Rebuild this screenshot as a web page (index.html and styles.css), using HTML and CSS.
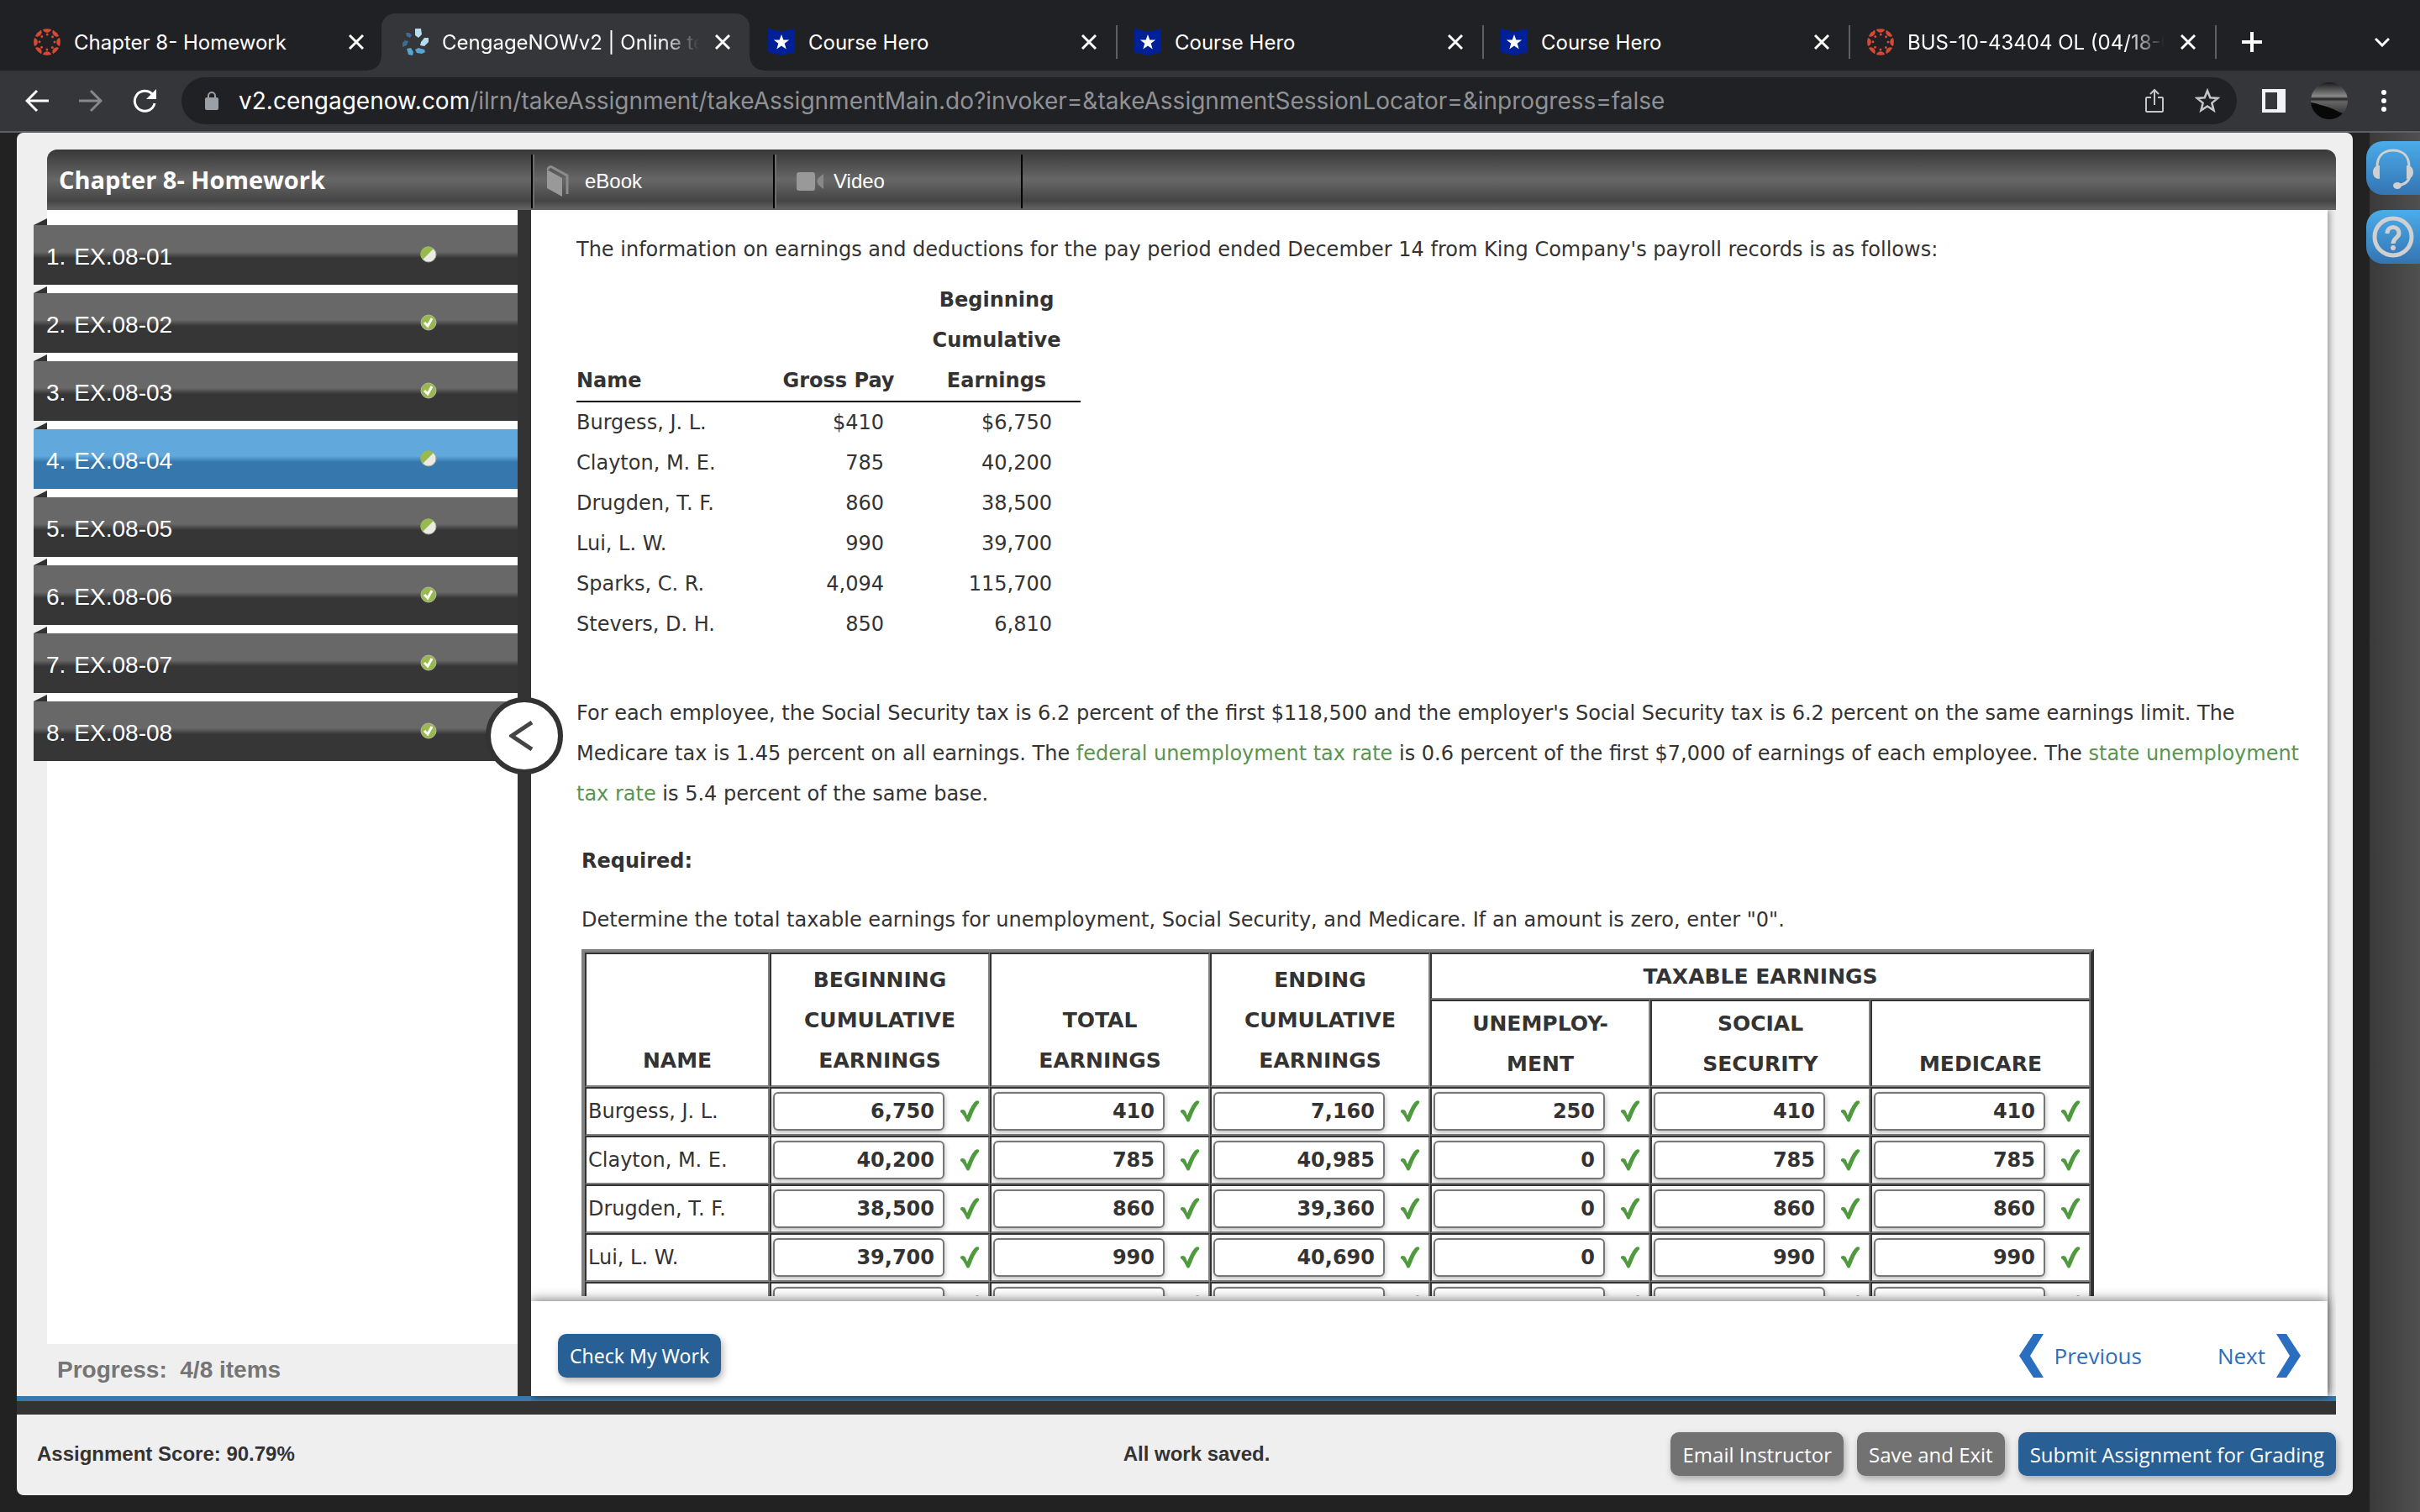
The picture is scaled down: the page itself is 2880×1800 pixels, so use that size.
FILE: index.html
```html
<!DOCTYPE html>
<html lang="en">
	<head>
		<meta charset="UTF-8">
		<title>CengageNOWv2 | Online teaching and learning resource</title>
		<link rel="stylesheet" href="styles.css">
	</head>
	<body>
		<!-- shared icons -->
		<svg class="defs" width="0" height="0">
			<symbol id="canvas" viewBox="0 0 32 32">
				<g id="wedges" fill="#d64a35">
					<path d="M11 1a16 16 0 0 1 10 0c-1 5-9 5-10 0z"/>
					<path d="M11 1a16 16 0 0 1 10 0c-1 5-9 5-10 0z" transform="rotate(45 16 16)"/>
					<path d="M11 1a16 16 0 0 1 10 0c-1 5-9 5-10 0z" transform="rotate(90 16 16)"/>
					<path d="M11 1a16 16 0 0 1 10 0c-1 5-9 5-10 0z" transform="rotate(135 16 16)"/>
					<path d="M11 1a16 16 0 0 1 10 0c-1 5-9 5-10 0z" transform="rotate(180 16 16)"/>
					<path d="M11 1a16 16 0 0 1 10 0c-1 5-9 5-10 0z" transform="rotate(225 16 16)"/>
					<path d="M11 1a16 16 0 0 1 10 0c-1 5-9 5-10 0z" transform="rotate(270 16 16)"/>
					<path d="M11 1a16 16 0 0 1 10 0c-1 5-9 5-10 0z" transform="rotate(315 16 16)"/>
				</g>
				<circle cx="16" cy="16" r="9" fill="none" stroke="#d64a35" stroke-width="3" stroke-linecap="round" stroke-dasharray="0 7.069"/>
			</symbol>
			<symbol id="hero" viewBox="0 0 32 32">
				<path fill="#00209a" d="M0 0l16 4 16-4v28l-16 4-16-4z"/>
				<path fill="#fff" d="M16 7l2.300 6.600h6.900l-5.500 4.200 2 6.700-5.700-4-5.700 4 2-6.700-5.500-4.200h6.900z"/>
			</symbol>
			<symbol id="close" viewBox="0 0 18 18">
				<path d="M1 1l16 16M17 1L1 17" stroke="#fff" stroke-width="3" fill="none"/>
			</symbol>
			<symbol id="done" viewBox="0 0 20 20">
				<circle cx="10" cy="10" r="9" fill="#97b94d" stroke="#b5b5a8"/>
				<path d="M5 10l4 4 5-9" stroke="#fff" stroke-width="3" fill="none"/>
			</symbol>
			<symbol id="half" viewBox="0 0 20 20">
				<circle cx="10" cy="10" r="9" fill="#e9ebe4" stroke="#a5a59a"/>
				<path d="M3 16A9 9 0 0 1 16 3z" fill="#97b94d"/>
			</symbol>
			<symbol id="tick" viewBox="0 0 24 26">
				<path d="M1 12c2-2 5-1 6 1l2 5C12 11 15 4 19 1c1-1 3-1 4 0 1 2-1 3-3 6-4 6-5 11-8 17-1 2-3 2-4 0C6 20 4 16 1 14z" fill="#4f9a3f"/>
			</symbol>
		</svg>

		<header class="browser">
			<div class="tabs">
				<div class="tab first"><svg class="fav"><use href="#canvas"/></svg><span>Chapter 8- Homework</span><button aria-label="Close"><svg><use href="#close"/></svg></button></div>
				<div class="tab active">
					<svg class="fav" viewBox="0 0 32 32">
						<g fill="#b5dcf0"><path d="M16 0h7l1 7-4 4-4-3z"/><path d="M27 11l5 0v5l-5 5-5-1 1-4z"/></g>
						<g fill="#58a5d4"><path d="M16 25l4-2 7 2 1 3-4 2-6-1z"/><path d="M6 24l5-1 3 5-1 4-5-1z"/></g>
						<g fill="#3d6c97"><path d="M1 17l3-3 4 1-2 5-5 2z"/><path d="M5 5l4 0 3 3-2 3-4-2z"/></g>
					</svg>
					<span>CengageNOWv2 | Online te</span><button aria-label="Close"><svg><use href="#close"/></svg></button>
				</div>
				<div class="tab"><svg class="fav"><use href="#hero"/></svg><span>Course Hero</span><button aria-label="Close"><svg><use href="#close"/></svg></button></div>
				<div class="tab line"><svg class="fav"><use href="#hero"/></svg><span>Course Hero</span><button aria-label="Close"><svg><use href="#close"/></svg></button></div>
				<div class="tab line"><svg class="fav"><use href="#hero"/></svg><span>Course Hero</span><button aria-label="Close"><svg><use href="#close"/></svg></button></div>
				<div class="tab line"><svg class="fav"><use href="#canvas"/></svg><span class="cut">BUS-10-43404 OL (04/18-0</span><button aria-label="Close"><svg><use href="#close"/></svg></button></div>
				<button class="new line" aria-label="New tab"><svg viewBox="0 0 24 24" width="24" height="24"><path d="M12 0v24M0 12h24" stroke="#fff" stroke-width="4"/></svg></button>
				<button class="more" aria-label="Search tabs"><svg viewBox="0 0 18 12" width="18" height="12"><path d="M1 2l8 8 8-8" stroke="#fff" stroke-width="3" fill="none"/></svg></button>
			</div>
			<div class="toolbar">
				<div class="nav">
					<button aria-label="Back"><svg viewBox="0 0 28 28" width="28" height="28"><path d="M28 14H3M14 2L2 14l12 12" stroke="#fff" stroke-width="3" fill="none"/></svg></button>
					<button aria-label="Forward"><svg viewBox="0 0 28 28" width="28" height="28"><path d="M0 14h25M14 2l12 12-12 12" stroke="#87888b" stroke-width="3" fill="none"/></svg></button>
					<button aria-label="Reload"><svg viewBox="0 0 28 28" width="28" height="28"><path d="M23 6a12 12 0 1 0 3 11" stroke="#fff" stroke-width="3" fill="none"/><path d="M28 0v12H16z" fill="#fff"/></svg></button>
				</div>
				<div class="url">
					<svg viewBox="0 0 16 22" width="16" height="22"><rect y="7" width="16" height="15" rx="2" fill="#9aa0a6"/><path d="M4 8V5a4 4 0 0 1 8 0v3" stroke="#9aa0a6" stroke-width="2" fill="none"/></svg>
					<p><b>v2.cengagenow.com</b>/ilrn/takeAssignment/takeAssignmentMain.do?invoker=&amp;takeAssignmentSessionLocator=&amp;inprogress=false</p>
					<button aria-label="Share"><svg viewBox="0 0 24 30" width="24" height="30"><path d="M8 11H3a1 1 0 0 0-1 1v15a1 1 0 0 0 1 1h18a1 1 0 0 0 1-1V12a1 1 0 0 0-1-1h-5M12 20V2M7 7l5-5 5 5" stroke="#c4c5c7" stroke-width="2" fill="none"/></svg></button>
					<button aria-label="Bookmark"><svg viewBox="0 0 30 30" width="30" height="30"><path d="M15 3l3.300 8.300 9 .6-7 5.700 2.300 8.800L15 21.500l-7.600 4.900 2.300-8.800-7-5.700 9-.6z" stroke="#c4c5c7" stroke-width="2.500" fill="none"/></svg></button>
				</div>
				<button aria-label="Side panel"><svg viewBox="0 0 28 28" width="28" height="28"><path d="M0 0h28v28H0zM4 4v20h14V4z" fill="#f1f3f4" fill-rule="evenodd"/></svg></button>
				<button aria-label="Profile"><svg viewBox="0 0 44 44" width="44" height="44"><defs><linearGradient id="sea" x2="0" y2="1"><stop offset="0" stop-color="#1a1a1a"/><stop offset=".38" stop-color="#8a8a8a"/><stop offset=".45" stop-color="#222"/><stop offset=".52" stop-color="#666"/><stop offset="1" stop-color="#222"/></linearGradient></defs><circle cx="22" cy="22" r="22" fill="url(#sea)"/><path d="M0 24c8 1 14 4 22 6 6 2 12 6 16 7A22 22 0 0 1 0 24z" fill="#080808"/></svg></button>
				<button class="menu" aria-label="Menu"><svg viewBox="0 0 6 26" width="6" height="26"><g fill="#fff"><circle cx="3" cy="3" r="3"/><circle cx="3" cy="13" r="3"/><circle cx="3" cy="23" r="3"/></g></svg></button>
			</div>
		</header>

		<div class="page">
			<main class="panel">
				<nav class="top">
					<h1>Chapter 8- Homework</h1>
					<a href="#" class="ebook"><svg viewBox="0 0 28 38" width="28" height="38"><path d="M1 5l18 10v22L1 27z" fill="#999"/><path d="M2 5c0-3 3-4 5-3l18 10v22" stroke="#8c8c8c" stroke-width="3" fill="none"/></svg>eBook</a>
					<a href="#" class="video"><svg viewBox="0 0 32 24" width="32" height="24"><rect width="22" height="22" y="1" rx="3" fill="#999"/><path d="M32 3v18l-6-5c-2-3-2-5 0-8z" fill="#888"/></svg>Video</a>
				</nav>
				<div class="work">
					<aside class="side">
						<ul id="items"></ul>
						<p class="progress">Progress:&nbsp; 4/8 items</p>
					</aside>
					<div class="divider">
						<button class="collapse" aria-label="Collapse"><svg viewBox="0 0 28 36" width="28" height="36"><path d="M27 2L3 18l24 16" stroke="#444" stroke-width="5" fill="none"/></svg></button>
					</div>
					<section class="content">
						<div class="scroll">
							<p>The information on earnings and deductions for the pay period ended December 14 from King Company's payroll records is as follows:</p>
							<table class="pay">
								<thead>
									<tr><th>Name</th><th>Gross Pay</th><th>Beginning<br>Cumulative<br>Earnings</th></tr>
								</thead>
								<tbody>
									<tr><td>Burgess, J. L.</td><td>$410</td><td>$6,750</td></tr>
									<tr><td>Clayton, M. E.</td><td>785</td><td>40,200</td></tr>
									<tr><td>Drugden, T. F.</td><td>860</td><td>38,500</td></tr>
									<tr><td>Lui, L. W.</td><td>990</td><td>39,700</td></tr>
									<tr><td>Sparks, C. R.</td><td>4,094</td><td>115,700</td></tr>
									<tr><td>Stevers, D. H.</td><td>850</td><td>6,810</td></tr>
								</tbody>
							</table>
							<p>For each employee, the Social Security tax is 6.2 percent of the first $118,500 and the employer's Social Security tax is 6.2 percent on the same earnings limit. The Medicare tax is 1.45 percent on all earnings. The <a href="#">federal unemployment tax rate</a> is 0.6 percent of the first $7,000 of earnings of each employee. The <a href="#">state unemployment tax rate</a> is 5.4 percent of the same base.</p>
							<div class="required">
								<h2>Required:</h2>
								<p>Determine the total taxable earnings for unemployment, Social Security, and Medicare. If an amount is zero, enter "0".</p>
								<table class="answers">
									<colgroup><col class="who"><col span="6"></colgroup>
									<thead>
										<tr>
											<th rowspan="2">NAME</th>
											<th rowspan="2">BEGINNING<br>CUMULATIVE<br>EARNINGS</th>
											<th rowspan="2">TOTAL<br>EARNINGS</th>
											<th rowspan="2">ENDING<br>CUMULATIVE<br>EARNINGS</th>
											<th colspan="3">TAXABLE EARNINGS</th>
										</tr>
										<tr class="sub"><th>UNEMPLOY-<br>MENT</th><th>SOCIAL<br>SECURITY</th><th>MEDICARE</th></tr>
									</thead>
									<tbody id="rows"></tbody>
								</table>
							</div>
						</div>
						<div class="foot">
							<button class="btn">Check My Work</button>
							<a href="#" class="prev"><svg viewBox="0 0 30 52" width="30" height="52"><path d="M29 0L13 26l16 26H17L0 26 17 0z" fill="#2a6ebf"/></svg>Previous</a>
							<a href="#">Next<svg viewBox="0 0 30 52" width="30" height="52"><path d="M1 0l16 26L1 52h12l17-26L13 0z" fill="#2a6ebf"/></svg></a>
						</div>
					</section>
				</div>
				<div class="bar"></div>
				<footer class="status">
					<p>Assignment Score: 90.79%</p>
					<p class="saved">All work saved.</p>
					<div class="actions">
						<button class="btn gray">Email Instructor</button>
						<button class="btn gray">Save and Exit</button>
						<button class="btn">Submit Assignment for Grading</button>
					</div>
				</footer>
			</main>
			<aside class="help">
				<button aria-label="Support"><svg viewBox="0 0 50 50" width="50" height="50"><path d="M6 24C6 11 13 4 25 4s19 7 19 20M45 34c-1 7-7 11-15 12" stroke="#d0d0d0" stroke-width="3" fill="none"/><path d="M9 22v16C4 38 1 35 1 30s3-8 8-8zM41 22v16c5 0 8-3 8-8s-3-8-8-8z" fill="#d0d0d0"/><ellipse cx="30" cy="46" rx="5" ry="4" fill="#d0d0d0"/></svg></button>
				<button aria-label="Help"><svg viewBox="0 0 50 50" width="50" height="50"><circle cx="25" cy="25" r="22" stroke="#d0d0d0" stroke-width="5" fill="none"/><path d="M18 21c0-10 14-10 14 0 0 5-7 5-7 12" stroke="#d0d0d0" stroke-width="5" fill="none"/><circle cx="25" cy="38" r="3" fill="#d0d0d0"/></svg></button>
			</aside>
		</div>
		<script src="main.js"></script>
	</body>
</html>
```
FILE: styles.css
```css
* {
	box-sizing: border-box;
}
body {
	margin: 0;
	height: 100vh;
	display: flex;
	flex-direction: column;
	overflow: hidden;
	background: #222;
	font-family: "DejaVu Sans", sans-serif;
	font-size: 24px;
	color: #333;
}
p, h1, h2, ul {
	margin: 0;
	padding: 0;
}
a {
	text-decoration: none;
}
button {
	border: none;
	padding: 0;
	background: none;
	font-family: inherit;
	display: flex;
	align-items: center;
	justify-content: center;
	flex-shrink: 0;
}
svg {
	display: block;
	flex-shrink: 0;
}
.defs {
	position: absolute;
}

/* browser */
.browser {
	background: #35363a;
	border-bottom: 2px solid #5f6063;
	font-family: Inter, sans-serif;
	color: #fff;
}
.tabs {
	display: flex;
	align-items: flex-end;
	height: 84px;
	background: #202124;
}
.tab {
	width: 436px;
	height: 68px;
	padding: 0 20px 0 22px;
	display: flex;
	align-items: center;
	font-size: 24px;
}
.tab.first {
	width: 454px;
	padding-left: 40px;
	padding-right: 18px;
}
.tab.active {
	position: relative;
	width: 438px;
	padding-left: 24px;
	background: #35363a;
	border-radius: 16px 16px 0 0;
}
.tab.active:before, .tab.active:after {
	content: "";
	position: absolute;
	bottom: 0;
	width: 16px;
	height: 16px;
}
.tab.active:before {
	right: 100%;
	background: radial-gradient(circle at 0 0, transparent 15px, #35363a 16px);
}
.tab.active:after {
	left: 100%;
	background: radial-gradient(circle at 100% 0, transparent 15px, #35363a 16px);
}
.fav {
	width: 32px;
	height: 32px;
	margin-right: 16px;
}
.tab span {
	flex: 1;
	overflow: hidden;
	white-space: nowrap;
}
.tab.active span, .tab .cut {
	mask-image: linear-gradient(to right, #000 85%, transparent);
}
.tab button {
	width: 24px;
	margin-left: 16px;
}
.tab button svg {
	width: 18px;
	height: 18px;
}
.line {
	background: linear-gradient(#5f6063, #5f6063) left center / 2px 40px no-repeat;
}
.new {
	height: 68px;
	width: 88px;
}
.more {
	height: 68px;
	margin-left: auto;
	margin-right: 36px;
}
.toolbar {
	display: flex;
	align-items: center;
	height: 72px;
	padding: 0 40px 0 30px;
	gap: 30px;
}
.nav {
	display: flex;
	gap: 36px;
}
.menu {
	margin-left: 10px;
}
.url {
	flex: 1;
	height: 56px;
	border-radius: 28px;
	background: #202124;
	padding: 0 20px 0 28px;
	display: flex;
	align-items: center;
	gap: 36px;
}
.url p {
	flex: 1;
	margin-left: -12px;
	font-size: 28px;
	color: #8f9195;
}
.url b {
	font-weight: 400;
	color: #fff;
}

/* page */
.page {
	flex: 1;
	min-height: 0;
	display: flex;
	padding: 0 0 20px 20px;
}
.panel {
	flex: 1;
	min-width: 0;
	display: flex;
	flex-direction: column;
	background: #efefef;
	border-radius: 8px;
	padding-top: 20px;
}
.top {
	display: flex;
	height: 72px;
	margin: 0 20px 0 36px;
	border-radius: 12px 12px 0 0;
	background: linear-gradient(#383838, #676767 50%, #444 85%, #666);
	color: #fff;
	font-family: "Open Sans", sans-serif;
}
.top h1 {
	width: 576px;
	padding-left: 14px;
	font-size: 29px;
	line-height: 72px;
}
.top a {
	display: flex;
	align-items: center;
	gap: 18px;
	padding-left: 16px;
	font: 24px "Liberation Sans", Arial, sans-serif;
	color: #fff;
	border-left: 2px solid #000;
	box-shadow: inset 2px 0 #6c6c6c;
	margin: 6px 0 2px;
}
.ebook {
	width: 288px;
}
.top .video {
	width: 297px;
	border-right: 2px solid #000;
	padding-left: 26px;
	gap: 12px;
}
.work {
	flex: 1;
	min-height: 0;
	display: flex;
	margin-right: 30px;
}
.side {
	width: 596px;
	display: flex;
	flex-direction: column;
	font-family: "Liberation Sans", Arial, sans-serif;
}
.side ul {
	flex: 1;
	margin-left: 36px;
	padding-top: 18px;
	background: #fff;
	list-style: none;
}
.side li {
	position: relative;
	display: flex;
	align-items: center;
	height: 71px;
	margin: 0 0 10px -16px;
	padding: 4px 96px 0 15px;
	background: linear-gradient(#686868 45%, #363636 55%);
	color: #fff;
	font-size: 28px;
}
.side li:before {
	content: "";
	position: absolute;
	left: 0;
	top: -8px;
	border-left: 16px solid transparent;
	border-bottom: 8px solid #333;
}
.side li.on {
	background: linear-gradient(#61a8dc 45%, #3678ad 55%);
}
.side li a {
	display: flex;
	gap: 10px;
	flex: 1;
	color: #fff;
}
.side li svg {
	width: 20px;
	height: 20px;
	margin-bottom: 6px;
}
.progress {
	height: 62px;
	line-height: 62px;
	padding-left: 48px;
	font-size: 28px;
	font-weight: bold;
	color: #757575;
}
.divider {
	width: 16px;
	background: #333;
	position: relative;
	z-index: 2;
}
.collapse {
	position: absolute;
	top: 580px;
	left: -38px;
	width: 92px;
	height: 92px;
	padding-right: 8px;
	border: 6px solid #333;
	border-radius: 50%;
	background: #fff;
}
.content {
	flex: 1;
	min-width: 0;
	display: flex;
	flex-direction: column;
	background: #fff;
	box-shadow: 2px 0 8px rgba(0,0,0,.4);
	clip-path: inset(0 -10px -6px 0);
}
.scroll {
	flex: 1;
	min-height: 0;
	overflow: hidden;
	margin-bottom: 6px;
	padding: 23px 20px 0 54px;
	line-height: 48px;
}
.scroll a {
	color: #5a9450;
}
.pay {
	width: 600px;
	margin: 12px 0 58px;
	border-collapse: collapse;
	table-layout: fixed;
}
.pay th {
	padding: 0;
	vertical-align: bottom;
	border-bottom: 2px solid #000;
	width: 200px;
}
.pay th:nth-child(2) {
	width: 176px;
}
.pay th:first-child {
	width: 224px;
	text-align: left;
}
.pay td {
	padding: 0 34px 0 0;
	text-align: right;
}
.pay td:first-child {
	text-align: left;
}
.required {
	padding: 32px 0 0 6px;
}
.required h2 {
	font-size: 24px;
	margin-bottom: 22px;
}
.answers {
	width: 1800px;
	margin-top: 11px;
	border: 4px solid #333;
	border-top-color: #808080;
	border-left-color: #808080;
	border-spacing: 0;
	table-layout: fixed;
}
.answers .who {
	width: 220px;
}
.answers th, .answers td {
	border: 2px solid #333;
	border-right-color: #808080;
	border-bottom-color: #808080;
	padding: 2px;
}
.answers th {
	vertical-align: bottom;
	padding-bottom: 5px;
	font-size: 25px;
}
.answers th[colspan], .answers .sub th {
	padding: 3px 2px 1px;
}
.answers td {
	height: 58px;
	padding: 0 2px;
}
.field {
	display: flex;
	align-items: center;
	gap: 18px;
}
.field input {
	width: 204px;
	height: 46px;
	padding: 0 10px;
	border: 2px solid #767676;
	border-radius: 6px;
	box-shadow: 0 2px 6px rgba(0,0,0,.3);
	font: bold 24px "DejaVu Sans", sans-serif;
	color: #333;
	text-align: right;
}
.field svg {
	width: 24px;
	height: 26px;
}
.foot {
	position: relative;
	display: flex;
	align-items: center;
	height: 113px;
	padding: 16px 32px 0;
	background: #fff;
	box-shadow: 0 -2px 12px rgba(0,0,0,.5);
}
.foot a {
	display: flex;
	align-items: center;
	gap: 12px;
	font: 26px "Open Sans", sans-serif;
	color: #2a6ebf;
}
.foot .prev {
	margin-left: auto;
	margin-right: 90px;
}
.btn {
	height: 52px;
	padding: 0 14px;
	border-radius: 10px;
	background: #285f94;
	box-shadow: 2px 4px 8px rgba(0,0,0,.3);
	font: 24px "Open Sans", sans-serif;
	color: #fff;
}
.foot .btn {
	font-family: "Noto Sans", sans-serif;
	font-size: 23px;
}
.btn.gray {
	background: #727272;
}
.bar {
	height: 22px;
	margin-right: 20px;
	background: #333;
	border-top: 6px solid #3678ad;
}
.status {
	display: grid;
	grid-template-columns: 1fr auto 1fr;
	align-items: center;
	height: 96px;
	padding: 0 20px 2px 24px;
	font: bold 24px "Liberation Sans", Arial, sans-serif;
}
.saved {
	padding-left: 24px;
}
.actions {
	display: flex;
	justify-content: flex-end;
	gap: 16px;
}
.help {
	width: 80px;
	padding: 10px 0 0 16px;
	margin-bottom: -20px;
	background: linear-gradient(to right, #222 20px, #3a3a3a 20px, #505050);
}
.help button {
	width: 64px;
	height: 64px;
	margin-bottom: 18px;
	border-radius: 20px 0 0 20px;
	background: linear-gradient(#4bacea, #3474b2);
}
```
FILE: main.js
```js
var list = ["half", "done", "done", "half", "half", "done", "done", "done"];
var items = document.getElementById("items");
for (var i = 0; i < list.length; i++) {
	var cls = i == 3 ? ' class="on"' : '';
	items.innerHTML += '<li' + cls + '><a href="#"><span>' + (i + 1) + '.</span> <span>EX.08-0' + (i + 1) + '</span></a><svg><use href="#' + list[i] + '"/></svg></li>';
}

var heads = ["Beginning", "Total", "Ending", "Unemployment", "Social Security", "Medicare"];
var data = [
	["Burgess, J. L.", "6,750", "410", "7,160", "250", "410", "410"],
	["Clayton, M. E.", "40,200", "785", "40,985", "0", "785", "785"],
	["Drugden, T. F.", "38,500", "860", "39,360", "0", "860", "860"],
	["Lui, L. W.", "39,700", "990", "40,690", "0", "990", "990"],
	["", "", "", "", "", "", ""]
];
var html = "";
data.forEach(function(row) {
	html += "<tr><td>" + row[0] + "</td>";
	for (var a = 1; a < row.length; a++) {
		html += '<td><div class="field"><input type="text" aria-label="' + row[0] + ' ' + heads[a - 1] + '" value="' + row[a] + '"><svg><use href="#tick"/></svg></div></td>';
	}
	html += "</tr>";
});
document.getElementById("rows").innerHTML = html;
```
